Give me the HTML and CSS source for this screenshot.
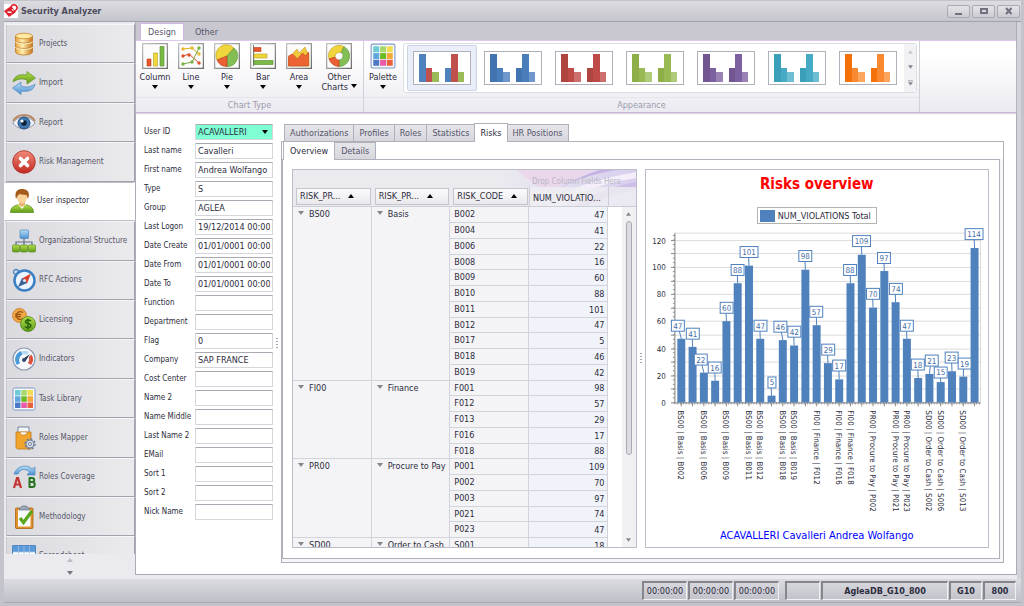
FILE: index.html
```html
<!DOCTYPE html>
<html lang="en">

<head>
    <meta charset="UTF-8">
    <meta name="viewport" content="width=device-width, initial-scale=1.0">
    <title>Security Analyzer</title>
    <link rel="stylesheet" href="styles.css">
</head>

<body>
    <!-- shared shapes -->
    <svg class="defs" width="0" height="0" aria-hidden="true">
        <defs>
            <linearGradient id="gold" x1="0" x2="1"><stop offset="0" stop-color="#e9a13b"/><stop offset=".4" stop-color="#fff0b0"/><stop offset="1" stop-color="#c9741a"/></linearGradient>
            <linearGradient id="green" x1="0" x2="0" y1="0" y2="1"><stop offset="0" stop-color="#b6e04c"/><stop offset="1" stop-color="#5f9a18"/></linearGradient>
            <linearGradient id="blue" x1="0" x2="0" y1="0" y2="1"><stop offset="0" stop-color="#b9def8"/><stop offset="1" stop-color="#4b8fd0"/></linearGradient>
            <linearGradient id="red" x1="0" x2="0" y1="0" y2="1"><stop offset="0" stop-color="#f08a7a"/><stop offset="1" stop-color="#c22a20"/></linearGradient>
            <linearGradient id="frame" x1="0" x2="1" y1="0" y2="1"><stop offset="0" stop-color="#c4c4c4"/><stop offset="1" stop-color="#6c6c6c"/></linearGradient>
            <symbol id="palette" viewBox="0 0 24 24">
                <rect x="1" y="1" width="22" height="22" rx="1.5" fill="#f5f8fd" stroke="#8299c4"/>
                <path d="M3 3h5.500v5.500H3z" fill="#6dcbd6"/><path d="M9.300 3h5.500v5.500H9.300z" fill="#a8d86c"/><path d="M15.500 3H21v5.500h-5.500z" fill="#f2dc50"/>
                <path d="M3 9.300h5.500v5.500H3z" fill="#5fa6dc"/><path d="M9.300 9.300h5.500v5.500H9.300z" fill="#6cba22"/><path d="M15.500 9.300H21v5.500h-5.500z" fill="#f5a838"/>
                <path d="M3 15.500h5.500V21H3z" fill="#4c78c4"/><path d="M9.300 15.500h5.500V21H9.300z" fill="#e85aa8"/><path d="M15.500 15.500H21V21h-5.500z" fill="#e8603c"/>
            </symbol>
            <symbol id="thumb" viewBox="0 0 58 34">
                <rect x=".5" y=".5" width="57" height="33" fill="#fff" stroke="#b0b0ba"/>
                <path class="s1" d="M6 3h7v28H6z"/><path class="s2" d="M13 17h6v14h-6z"/><path class="s3" d="M19 21h7v10h-7z"/>
                <path class="s1" d="M32 17h6v14h-6z"/><path class="s2" d="M38 3h7v28h-7z"/><path class="s3" d="M45 21h6v10h-6z"/>
            </symbol>
            <symbol id="thumb-mixed" viewBox="0 0 58 34">
                <rect x=".5" y=".5" width="57" height="33" fill="#fff" stroke="#b0b0ba"/>
                <path class="s1" d="M6 3h7v28H6zM32 17h6v14h-6z"/><path class="s2" d="M13 17h6v14h-6zM38 3h7v28h-7z"/><path class="s3" d="M19 21h7v10h-7zM45 21h6v10h-6z"/>
            </symbol>
            <symbol id="down" viewBox="0 0 6 4"><path d="M0 0h6L3 4z"/></symbol>
            <symbol id="up" viewBox="0 0 6 4"><path d="M0 4h6L3 0z"/></symbol>
        </defs>
    </svg>

    <div class="window">
        <header class="titlebar">
            <svg class="logo" viewBox="0 0 14 14"><path fill="#fff" d="M0 0h14v14H0z"/><path fill="#e01f2c" d="M0 7l7-5 5 6-7 5z"/><path d="M7 3c1-3 5-3 6 0 .6 2-1 3-2 4" fill="none" stroke="#e01f2c" stroke-width="1.600"/><path d="M3.500 8l4 .5M8 5.500l1.500 1" stroke="#fff" stroke-width="1.300"/></svg>
            <h1>Security Analyzer</h1>
            <div class="window-buttons">
                <button aria-label="Minimize"><svg viewBox="0 0 8 8"><path d="M0 6h7v2H0z"/></svg></button>
                <button aria-label="Maximize"><svg viewBox="0 0 8 8"><path fill-rule="evenodd" d="M0 1h8v6H0zM2 3v2h4V3z"/></svg></button>
                <button aria-label="Close"><svg viewBox="0 0 8 8"><path d="M1 1l5.500 6M6.500 1L1 7" fill="none" stroke="#70707e" stroke-width="2"/></svg></button>
            </div>
        </header>

        <div class="main">
            <nav class="sidebar">
                <div class="nav-list">
                    <a href="#projects"><svg viewBox="0 0 24 24"><path d="M3.500 4v16c1 4 16 4 17 0V4z" fill="url(#gold)" stroke="#b97a28" stroke-width=".8"/><ellipse cx="12" cy="4" rx="8.500" ry="2.800" fill="#ffe9a0" stroke="#c98a30" stroke-width=".8"/><path d="M3.500 9.500c2 3 15 3 17 0M3.500 15c2 3 15 3 17 0" fill="none" stroke="#fff3c4" stroke-width="1.200"/><path d="M3.500 8.700c2 3 15 3 17 0M3.500 14.200c2 3 15 3 17 0" fill="none" stroke="#b97424" stroke-width=".6"/></svg>Projects</a>
                    <a href="#import"><svg viewBox="0 0 24 24"><path d="M1 11C2 4 9 3 15 4V.500L23.500 7 15 13V9C10 7 5 8 1 11z" fill="url(#green)" stroke="#5d9022" stroke-width=".7"/><path d="M23 13c-1 7-8 8-14 7v3.500L.500 17 9 11v4c5 2 10 1 14-2z" fill="url(#blue)" stroke="#4a84bb" stroke-width=".7"/></svg>Import</a>
                    <a href="#report"><svg viewBox="0 0 24 24"><path d="M1 12C6 4 18 4 23 12c-5 7-17 8-22 0z" fill="#eef2f8" stroke="#8792a8"/><circle cx="12" cy="12" r="6" fill="#3f78ae" stroke="#264e7c"/><circle cx="12" cy="12" r="2.800" fill="#10213a"/><circle cx="10" cy="10" r="1.600" fill="#fff"/><path d="M1 10C6 2 18 2 23 10" fill="none" stroke="#b98a60" stroke-width="1.800"/></svg>Report</a>
                    <a href="#risk"><svg viewBox="0 0 24 24"><circle cx="12" cy="12" r="11.300" fill="url(#red)" stroke="#a82c24" stroke-width=".8"/><path d="M8.500 8.500l7 7M15.500 8.500l-7 7" stroke="#fff" stroke-width="3.600" stroke-linecap="round"/></svg>Risk Management</a>
                    <a href="#user" class="active"><svg viewBox="0 0 24 24"><path d="M.500 23.500c0-6 5-7 8-8h7c3 1 8 2 8 8z" fill="url(#green)" stroke="#4f8a1c" stroke-width=".7"/><path d="M8 15l4 5 4-5z" fill="#fff"/><path d="M9 11h6v5l-3 2-3-2z" fill="#e8b070"/><ellipse cx="12" cy="8" rx="5" ry="6.500" fill="#f9d29a"/><path d="M6 10C4 2 8 0 12 0s9 2 6 10l-1.500-4c-4 0-6-1-7-1L7.500 7z" fill="#a45c1c"/></svg>User inspector</a>
                    <a href="#org"><svg viewBox="0 0 24 24"><path d="M12 9v5M4 16v-3h16v3M12 13v3" fill="none" stroke="#5c7089" stroke-width="1.200"/><rect x="8" y="1" width="8.500" height="8.500" rx="1" fill="url(#blue)" stroke="#4b86bc" stroke-width=".7"/><g fill="url(#green)" stroke="#5a9020" stroke-width=".7"><rect x=".5" y="16" width="7" height="7" rx="1"/><rect x="8.500" y="16" width="7" height="7" rx="1"/><rect x="16.500" y="16" width="7" height="7" rx="1"/></g></svg>Organizational Structure</a>
                    <a href="#rfc"><svg viewBox="0 0 24 24"><circle cx="4" cy="4" r="2.500" fill="none" stroke="#4b8ac9" stroke-width="1.300"/><circle cx="12.500" cy="12.500" r="10" fill="#eaf5ff" stroke="#3c7fc3" stroke-width="2.500"/><path d="M19 5.500l-4 10-5-5z" fill="#d8402c"/><path d="M6 19l4-9 5 5z" fill="#3a5f98"/><circle cx="12.500" cy="12.500" r="1.600" fill="#dbe8f6"/></svg>RFC Actions</a>
                    <a href="#licensing"><svg viewBox="0 0 24 24"><circle cx="7.500" cy="7.500" r="7" fill="#f0a848" stroke="#c67a20" stroke-width=".8"/><path d="M11 4.500C7 2 4.500 5 4.500 7.500S7 13 11 10.500M3 6.500h6M3 8.700h6" fill="none" stroke="#9a5510" stroke-width="1.300"/><circle cx="16" cy="16" r="7.500" fill="url(#green)" stroke="#4c8618" stroke-width=".8"/><path d="M19 13c-2-2-6-1-5.500 1s5.500 1.500 5.500 3.500-4 3-6 1M16 10.500v11" fill="none" stroke="#28640c" stroke-width="1.500"/></svg>Licensing</a>
                    <a href="#indicators"><svg viewBox="0 0 24 24"><circle cx="12" cy="12" r="11" fill="#f6f8fb" stroke="#8c9cb4" stroke-width="1.200"/><path d="M5 18A9 9 0 0 1 9 4l1.500 3.500A6 6 0 0 0 8 16z" fill="#4a9ad8"/><path d="M10 4a9 9 0 0 1 7 1l-2.500 3c-1-.7-2.500-.8-4-.5z" fill="#b5d9f0"/><path d="M19.500 7.500a9 9 0 0 1-.5 10.500l-3-2a6 6 0 0 0 .8-6z" fill="#d9503c"/><path d="M18 7l-4.500 7-2.500-2z" fill="#20304c"/><circle cx="12" cy="13" r="2" fill="#33486a"/></svg>Indicators</a>
                    <a href="#tasks"><svg viewBox="0 0 24 24"><use href="#palette"/></svg>Task Library</a>
                    <a href="#mapper"><svg viewBox="0 0 24 24"><path d="M6 1h11v7H6z" fill="#f4f6fa" stroke="#75859f"/><path d="M4 6h15v17H6c-1 0-2-1-2-2z" fill="#f2a52c" stroke="#c07a16" stroke-width=".8"/><path d="M8 6h7c0 4-7 4-7 0z" fill="#fff" stroke="#b97a20" stroke-width=".6"/><circle cx="18" cy="18" r="4" fill="#d6dde8" stroke="#71809a" stroke-width="1"/><circle cx="18" cy="18" r="5" fill="none" stroke="#71809a" stroke-width="1.500" stroke-dasharray="2 1.900"/><circle cx="18" cy="18" r="1.500" fill="#fff" stroke="#71809a"/></svg>Roles Mapper</a>
                    <a href="#coverage"><svg viewBox="0 0 24 24"><path d="M2 9C5 0 16-1 20 4l3-2v8h-8l2.500-3C13 3 8 4 6 9z" fill="url(#blue)" stroke="#4a88bd" stroke-width=".7"/><path d="M2 23l3-10h1l3 10M3 19.500h5" fill="none" stroke="#c43430" stroke-width="2.200"/><path d="M17.500 12.500v10M17 13h3c3 0 3 4 0 4h-2 2.500c3 0 3 5 0 5H17" fill="none" stroke="#27761f" stroke-width="2"/></svg>Roles Coverage</a>
                    <a href="#methodology"><svg viewBox="0 0 24 24"><rect x="3.500" y="3" width="17.500" height="20.500" rx="1" fill="#e0912c" stroke="#a96514" stroke-width=".8"/><path d="M6 5h12.500v16.500H6z" fill="#f8fafc"/><path d="M7 5c0-3 3-2 3-4h4.500c0 2 3 1 3 4z" fill="#9aa7b8" stroke="#65748b" stroke-width=".7"/><path d="M8 13l3.500 4.500L20 6" fill="none" stroke="#5aa61c" stroke-width="3.200"/></svg>Methodology</a>
                    <a href="#spreadsheet"><svg viewBox="0 0 24 24"><path d="M.500 1.500h23v21H.500z" fill="#fff" stroke="#5588c0"/><path d="M1 2h22v6H1z" fill="#5a9ada"/><path d="M6.500 2v20M12 2v20M17.500 2v20M1 8h22M1 13h22" stroke="#9dc2e6" stroke-width=".8"/></svg>Spreadsheet</a>
                </div>
                <div class="nav-scroll">
                    <button aria-label="Scroll up" disabled><svg><use href="#up"/></svg></button>
                    <button aria-label="Scroll down"><svg><use href="#down"/></svg></button>
                </div>
            </nav>

            <div class="content">
                <div class="ribbon-tabs">
                    <button class="active">Design</button>
                    <button>Other</button>
                </div>
                <div class="ribbon">
                    <section class="group">
                        <div class="group-body">
                            <button><svg class="icon" viewBox="0 0 26 26"><path d="M.500.500h25v25H.500z" fill="#fcfcfc" stroke="url(#frame)" stroke-width="1.500"/><path d="M5 16h4v7H5z" fill="#e8562c" stroke="#b93c18" stroke-width=".6"/><path d="M11.500 10h4v13h-4z" fill="#f0d83c" stroke="#b39c18" stroke-width=".6"/><path d="M18 3.500h4V23h-4z" fill="#7cba48" stroke="#4f8c28" stroke-width=".6"/></svg>Column<svg class="arrow"><use href="#down"/></svg></button>
                            <button><svg class="icon" viewBox="0 0 26 26"><path d="M.500.500h25v25H.500z" fill="#fcfcfc" stroke="url(#frame)" stroke-width="1.500"/><path d="M5 6l9-1 7 6" fill="none" stroke="#d8b020"/><path d="M5 13l6-2 10 9" fill="none" stroke="#d84c28"/><path d="M5 21l9-2 7-14" fill="none" stroke="#70aa40"/><g fill="#e8b92c"><circle cx="5" cy="6" r="1.700"/><circle cx="14" cy="5" r="1.700"/><circle cx="21" cy="11" r="1.700"/></g><g fill="#e0502c"><circle cx="5" cy="13" r="1.700"/><circle cx="11" cy="12" r="1.700"/><circle cx="21" cy="20" r="1.700"/></g><g fill="#78b444"><circle cx="5" cy="21" r="1.700"/><circle cx="14" cy="19" r="1.700"/><circle cx="21" cy="5" r="1.700"/></g></svg>Line<svg class="arrow"><use href="#down"/></svg></button>
                            <button><svg class="icon" viewBox="0 0 26 26"><path d="M.500.500h25v25H.500z" fill="#fcfcfc" stroke="url(#frame)" stroke-width="1.500"/><path d="M13 13L3 17A10.500 10.500 0 0 1 20 5z" fill="#f0d63c" stroke="#b79a1c" stroke-width=".6"/><path d="M13 13l7-8a10.500 10.500 0 0 1-7 18.500z" fill="#84be54" stroke="#55902c" stroke-width=".6"/><path d="M13 13v10.500A10.500 10.500 0 0 1 3 17z" fill="#ea6034" stroke="#b9401c" stroke-width=".6"/></svg>Pie<svg class="arrow"><use href="#down"/></svg></button>
                            <button><svg class="icon" viewBox="0 0 26 26"><path d="M.500.500h25v25H.500z" fill="#fcfcfc" stroke="url(#frame)" stroke-width="1.500"/><path d="M3.500 2v21" stroke="#777"/><path d="M4 4.500h7v4H4z" fill="#e8562c" stroke="#b93c18" stroke-width=".6"/><path d="M4 11h13v4H4z" fill="#f0d83c" stroke="#b39c18" stroke-width=".6"/><path d="M4 17.500h19v4H4z" fill="#7cba48" stroke="#4f8c28" stroke-width=".6"/></svg>Bar<svg class="arrow"><use href="#down"/></svg></button>
                            <button><svg class="icon" viewBox="0 0 26 26"><path d="M.500.500h25v25H.500z" fill="#fcfcfc" stroke="url(#frame)" stroke-width="1.500"/><path d="M2.500 15l8.500-9 2 4 6-6 2 5 2 2v12h-20.500z" fill="#f0c83c" stroke="#c49a1c" stroke-width=".6"/><path d="M2.500 13l4-2 5 5 5-6 3 3 3-4v14h-20z" fill="#ec6434" stroke="#c3441c" stroke-width=".6"/></svg>Area<svg class="arrow"><use href="#down"/></svg></button>
                            <button class="wide"><svg class="icon" viewBox="0 0 26 26"><path d="M.500.500h25v25H.500z" fill="#fcfcfc" stroke="url(#frame)" stroke-width="1.500"/><path d="M3 16A10.500 10.500 0 0 1 18 3.700L15 9.500A4.500 4.500 0 0 0 9 14z" fill="#f0d63c" stroke="#b79a1c" stroke-width=".6"/><path d="M18 3.700A10.500 10.500 0 0 1 13 23.500V17a4 4 0 0 0 2-7.500z" fill="#84be54" stroke="#55902c" stroke-width=".6"/><path d="M13 23.500A10.500 10.500 0 0 1 3 16l6-2c1 2 2 3 4 3z" fill="#ea6034" stroke="#b9401c" stroke-width=".6"/></svg>Other<span>Charts <svg class="arrow"><use href="#down"/></svg></span></button>
                        </div>
                        <h2>Chart Type</h2>
                    </section>
                    <section class="group appearance">
                        <div class="group-body">
                            <button><svg class="icon" viewBox="0 0 24 24"><use href="#palette"/></svg>Palette<svg class="arrow"><use href="#down"/></svg></button>
                            <div class="gallery">
                                <button class="mixed selected" aria-label="Office"><svg><use href="#thumb-mixed"/></svg></button>
                                <button class="blue" aria-label="Blue"><svg><use href="#thumb"/></svg></button>
                                <button class="red" aria-label="Red"><svg><use href="#thumb"/></svg></button>
                                <button class="green" aria-label="Green"><svg><use href="#thumb"/></svg></button>
                                <button class="purple" aria-label="Purple"><svg><use href="#thumb"/></svg></button>
                                <button class="teal" aria-label="Teal"><svg><use href="#thumb"/></svg></button>
                                <button class="orange" aria-label="Orange"><svg><use href="#thumb"/></svg></button>
                                <div class="gallery-scroll">
                                    <svg class="off"><use href="#up"/></svg>
                                    <svg><use href="#down"/></svg>
                                    <svg class="more" viewBox="0 0 6 6"><path d="M0 0h6v1H0zM0 2h6L3 6z"/></svg>
                                </div>
                            </div>
                        </div>
                        <h2>Appearance</h2>
                    </section>
                </div>

                <div class="workspace">
                    <form class="user-form">
                        <label for="userid">User ID</label><select id="userid"><option>ACAVALLERI</option></select>
                        <label for="lastname">Last name</label><input id="lastname" value="Cavalleri">
                        <label for="firstname">First name</label><input id="firstname" value="Andrea Wolfango">
                        <label for="type">Type</label><input id="type" value="S">
                        <label for="group">Group</label><input id="group" value="AGLEA">
                        <label for="logon">Last Logon</label><input id="logon" value="19/12/2014 00:00:00">
                        <label for="created">Date Create</label><input id="created" value="01/01/0001 00:00:00">
                        <label for="from">Date From</label><input id="from" value="01/01/0001 00:00:00">
                        <label for="to">Date To</label><input id="to" value="01/01/0001 00:00:00">
                        <label for="function">Function</label><input id="function">
                        <label for="department">Department</label><input id="department">
                        <label for="flag">Flag</label><input id="flag" value="0">
                        <label for="company">Company</label><input id="company" value="SAP FRANCE">
                        <label for="cost">Cost Center</label><input id="cost">
                        <label for="name2">Name 2</label><input id="name2">
                        <label for="middle">Name Middle</label><input id="middle">
                        <label for="last2">Last Name 2</label><input id="last2">
                        <label for="email">EMail</label><input id="email">
                        <label for="sort1">Sort 1</label><input id="sort1">
                        <label for="sort2">Sort 2</label><input id="sort2">
                        <label for="nick">Nick Name</label><input id="nick">
                    </form>
                    <div class="splitter"></div>

                    <div class="details">
                        <div class="tabs">
                            <button>Authorizations</button>
                            <button>Profiles</button>
                            <button>Roles</button>
                            <button>Statistics</button>
                            <button class="active">Risks</button>
                            <button>HR Positions</button>
                        </div>
                        <div class="outer-pane">
                            <div class="tabs inner-tabs">
                                <button class="active">Overview</button>
                                <button>Details</button>
                            </div>
                            <div class="inner-pane">
                                <div class="pivot">
                                    <svg class="splash" viewBox="0 0 140 36" preserveAspectRatio="none">
                                        <defs><linearGradient id="veil"><stop offset="0" stop-color="#ebebef"/><stop offset="1" stop-color="#d9cfee"/></linearGradient></defs>
                                        <path d="M0 0h140v36H0z" fill="url(#veil)"/>
                                        <path d="M20 0h80L50 22z" fill="#ead7ec"/>
                                        <path d="M40 36C70 10 90 6 120 0h-16C80 8 60 18 40 36z" fill="#c4b2e4"/>
                                        <path d="M52 36C80 14 100 10 140 2v6C104 14 84 22 66 36z" fill="#f4effa"/>
                                        <path d="M80 36c16-14 40-20 60-24v8c-20 4-36 8-48 16z" fill="#cdbfe8"/>
                                    </svg>
                                    <table>
                                        <colgroup><col><col><col><col><col class="rest"></colgroup>
                                        <thead>
                                            <tr class="drop-row"><td colspan="3"></td><td colspan="2">Drop Column Fields Here</td></tr>
                                            <tr class="field-row">
                                                <th><span class="field">RISK_PR...<svg><use href="#up"/></svg></span></th>
                                                <th><span class="field">RISK_PR...<svg><use href="#up"/></svg></span></th>
                                                <th><span class="field">RISK_CODE<svg><use href="#up"/></svg></span></th>
                                                <th class="measure">NUM_VIOLATIO...</th>
                                                <th class="filler"></th>
                                            </tr>
                                        </thead>
                                        <tbody>
                                            <tr><th rowspan="11"><svg><use href="#down"/></svg>BS00</th><th rowspan="11"><svg><use href="#down"/></svg>Basis</th><th>B002</th><td>47</td></tr>
                                            <tr><th>B004</th><td>41</td></tr>
                                            <tr><th>B006</th><td>22</td></tr>
                                            <tr><th>B008</th><td>16</td></tr>
                                            <tr><th>B009</th><td>60</td></tr>
                                            <tr><th>B010</th><td>88</td></tr>
                                            <tr><th>B011</th><td>101</td></tr>
                                            <tr><th>B012</th><td>47</td></tr>
                                            <tr><th>B017</th><td>5</td></tr>
                                            <tr><th>B018</th><td>46</td></tr>
                                            <tr><th>B019</th><td>42</td></tr>
                                            <tr><th rowspan="5"><svg><use href="#down"/></svg>FI00</th><th rowspan="5"><svg><use href="#down"/></svg>Finance</th><th>F001</th><td>98</td></tr>
                                            <tr><th>F012</th><td>57</td></tr>
                                            <tr><th>F013</th><td>29</td></tr>
                                            <tr><th>F016</th><td>17</td></tr>
                                            <tr><th>F018</th><td>88</td></tr>
                                            <tr><th rowspan="5"><svg><use href="#down"/></svg>PR00</th><th rowspan="5"><svg><use href="#down"/></svg>Procure to Pay</th><th>P001</th><td>109</td></tr>
                                            <tr><th>P002</th><td>70</td></tr>
                                            <tr><th>P003</th><td>97</td></tr>
                                            <tr><th>P021</th><td>74</td></tr>
                                            <tr><th>P023</th><td>47</td></tr>
                                            <tr><th><svg><use href="#down"/></svg>SD00</th><th><svg><use href="#down"/></svg>Order to Cash</th><th>S001</th><td>18</td></tr>
                                        </tbody>
                                    </table>
                                    <div class="scrollbar">
                                        <svg><use href="#up"/></svg>
                                        <div class="track"><div class="thumb"></div></div>
                                        <svg><use href="#down"/></svg>
                                    </div>
                                </div>
                                <div class="splitter"></div>
                                <figure class="chart">
                                    <h2>Risks overview</h2>
                                    <div class="legend"><span class="swatch"></span>NUM_VIOLATIONS Total</div>
                                    <svg id="plot" viewBox="0 0 344 300" role="img" aria-label="Violations per risk"></svg>
                                    <figcaption>ACAVALLERI Cavalleri Andrea Wolfango</figcaption>
                                </figure>
                            </div>
                        </div>
                    </div>
                </div>
            </div>
        </div>

        <footer class="statusbar">
            <span class="cell">00:00:00</span>
            <span class="cell">00:00:00</span>
            <span class="cell">00:00:00</span>
            <span class="cell blank"></span>
            <span class="cell database">AgleaDB_G10_800</span>
            <span class="cell short">G10</span>
            <span class="cell short">800</span>
        </footer>
    </div>
    <script src="chart.js"></script>
</body>

</html>
```
FILE: styles.css
```css
* {
    box-sizing: border-box;
}

body {
    margin: 0;
    font-family: "DejaVu Sans Condensed", "DejaVu Sans", Tahoma, sans-serif;
    font-size: 9px;
    line-height: 12px;
    color: #2c2c3c;
    background: #c6c6ce;
}

button,
input,
select {
    font: inherit;
    color: inherit;
    margin: 0;
}

button {
    border: 0;
    padding: 0;
    background: none;
}

h1,
h2 {
    margin: 0;
    font-size: 9px;
}

.defs {
    position: absolute;
}

.window {
    display: flex;
    flex-direction: column;
    height: 100vh;
    border: solid #c3c3cc;
    border-width: 1px 3px 3px 4px;
    border-radius: 4px 4px 2px 2px;
}

/* title bar */
.titlebar {
    display: flex;
    align-items: center;
    gap: 3px;
    height: 21px;
    background: linear-gradient(#dcdce1, #c5c5cd);
    border-bottom: 1px solid #a2a2ae;
    color: #4b4b5a;
}

.logo {
    width: 14px;
    height: 14px;
}

.window-buttons {
    display: flex;
    gap: 2px;
    margin-left: auto;
    padding-right: 1px;
}

.window-buttons button {
    display: flex;
    align-items: center;
    justify-content: center;
    width: 23px;
    height: 13px;
    border: 1px solid #aaaab5;
    border-radius: 2px;
    background: linear-gradient(#e4e4e8, #cbcbd2);
}

.window-buttons svg {
    width: 8px;
    height: 8px;
    fill: #70707e;
}

.main {
    display: flex;
    flex: 1;
    min-height: 0;
    background: #ebebef;
    border-right: 4px solid #d3d3da;
}

/* sidebar */
.sidebar {
    display: flex;
    flex-direction: column;
    flex: 0 0 131px;
}

.nav-list {
    flex: 1;
    min-height: 0;
    display: grid;
    grid-auto-rows: 7.44%;
    overflow: hidden;
    padding-top: 2px;
    font-size: 8px;
}

.nav-list a {
    display: flex;
    align-items: center;
    gap: 3px;
    padding-left: 5px;
    margin-left: 2px;
    border: 1px solid #a3a3af;
    border-top-color: #f6f6f8;
    border-left-color: #c9c9d1;
    background: linear-gradient(90deg, #dadadf, #ebebee);
    color: #565666;
    text-decoration: none;
    white-space: nowrap;
}

.nav-list a.active {
    margin-left: 0;
    background: #fff;
    border-color: #bdbdc6 #fff;
    color: #2c2c3c;
}

.nav-list svg {
    flex: none;
    width: 24px;
    height: 24px;
}

.nav-scroll {
    display: flex;
    flex-direction: column;
    align-items: center;
    justify-content: space-around;
    height: 25px;
}

.nav-scroll button {
    display: flex;
}

.nav-scroll svg {
    width: 6px;
    height: 4px;
    fill: #74747f;
}

.nav-scroll button:disabled svg {
    fill: #bcbcc4;
}

.content {
    display: flex;
    flex-direction: column;
    flex: 1;
    min-width: 0;
    margin-bottom: 4px;
    border: solid #acacb7;
    border-width: 0 1px 1px 1px;
    background: #fff;
}

/* ribbon */
.ribbon-tabs {
    display: flex;
    padding: 1px 4px 0;
    background: #c9c8d1;
    border-bottom: 1px solid #dcc8ea;
}

.ribbon-tabs button {
    height: 17px;
    padding: 0 8px;
    color: #55556a;
}

.ribbon-tabs button.active {
    margin: 0 3px -1px 0;
    background: #fff;
    border: 1px solid #d3b6e6;
    border-bottom: 0;
    padding: 0 7px;
}

.ribbon {
    display: flex;
    height: 72px;
    background: linear-gradient(#fff 20%, #ebeaf1);
    border-bottom: 1px solid #c8b4d8;
    box-shadow: 0 1px 1px #d8d8de;
}

.group {
    display: flex;
    flex-direction: column;
    border-right: 1px solid #d0d0d9;
}

.group h2 {
    border-top: 1px solid #e6e5ec;
    height: 15px;
    font-weight: normal;
    line-height: 14px;
    text-align: center;
    color: #9c9cab;
}

.group-body {
    display: flex;
    flex: 1;
    padding: 2px 2px 0 1px;
}

.group-body > button {
    display: flex;
    flex-direction: column;
    align-items: center;
    width: 36px;
    line-height: 10px;
}

.group-body > .wide {
    width: 44px;
}

.icon {
    width: 26px;
    height: 26px;
    margin-bottom: 3px;
}

.arrow {
    width: 6px;
    height: 4px;
    margin-top: 3px;
}

span .arrow {
    margin: 0 0 2px;
}

.gallery {
    display: flex;
    align-items: center;
    gap: 1px;
    height: 50px;
    margin-left: 2px;
    padding: 0 0 0 3px;
    border: 1px solid #dcdce4;
    border-radius: 3px;
    background: #fff;
}

.gallery button {
    display: flex;
    align-items: center;
    justify-content: center;
    width: 70px;
    height: 46px;
    border: 1px solid transparent;
    border-radius: 2px;
}

.gallery .selected {
    background: #e9eef8;
    border-color: #ccd3e2;
}

.gallery button svg {
    width: 58px;
    height: 34px;
}

.s1 {
    fill: var(--a);
}

.s2 {
    fill: var(--b);
}

.s3 {
    fill: var(--c);
}

.mixed {
    --a: #4f81bd;
    --b: #c0504d;
    --c: #9bbb59;
}

.blue {
    --a: #4474b0;
    --b: #4a7ebb;
    --c: #6f97cb;
}

.red {
    --a: #b04441;
    --b: #be4b48;
    --c: #cd6f6d;
}

.green {
    --a: #8eae48;
    --b: #98b954;
    --c: #afca78;
}

.purple {
    --a: #735690;
    --b: #7d60a0;
    --c: #9a82b5;
}

.teal {
    --a: #3aa0ba;
    --b: #46aac5;
    --c: #6dbdd3;
}

.orange {
    --a: #f5720a;
    --b: #fa8a32;
    --c: #fba55e;
}

.gallery-scroll {
    display: flex;
    flex-direction: column;
    align-items: center;
    justify-content: space-around;
    width: 12px;
    height: 48px;
    background: #f2f2f5;
}

.gallery-scroll svg {
    width: 5px;
    height: 4px;
    fill: #858592;
}

.gallery-scroll .more {
    height: 6px;
}

.gallery-scroll .off {
    fill: #c8c8d0;
}

/* user data */
.workspace {
    display: flex;
    flex: 1;
    min-height: 0;
    padding: 11px 12px 11px 8px;
}

.user-form {
    display: grid;
    grid-template-columns: 51px 78px;
    grid-auto-rows: 16px;
    row-gap: 3px;
    align-content: start;
    align-items: center;
}

.user-form label {
    font-size: 8px;
    white-space: nowrap;
}

.user-form input,
.user-form select {
    width: 100%;
    height: 16px;
    padding: 0 2px;
    border: 1px solid #d5d5dc;
    border-top-color: #a9a9b4;
    border-radius: 0;
    background: #fff;
}

.user-form select {
    appearance: none;
    background: #7fffd4 url('data:image/svg+xml,<svg xmlns="http://www.w3.org/2000/svg" viewBox="0 0 6 4"><path d="M0 0h6L3 4z"/></svg>') no-repeat right 4px center / 6px 4px;
}

.splitter {
    flex: 0 0 8px;
    align-self: center;
    height: 12px;
    background: repeating-linear-gradient(#a4a4b0 0 1px, #fff 1px 3px) center / 2px 100% no-repeat;
}

/* tab panes */
.details {
    display: flex;
    flex-direction: column;
    flex: 1;
    min-width: 0;
}

.tabs {
    display: flex;
    align-items: flex-end;
    padding-left: 3px;
}

.tabs button {
    height: 17px;
    padding: 0 5px;
    border: 1px solid #b0b0bb;
    border-bottom: 0;
    margin-right: -1px;
    background: linear-gradient(#e6e6ea, #d6d6dd);
    color: #55556a;
}

.tabs button.active {
    position: relative;
    height: 19px;
    margin-bottom: -1px;
    margin-top: -1px;
    background: #fff;
    color: #2c2c3c;
}

.outer-pane {
    display: flex;
    flex-direction: column;
    flex: 1;
    min-height: 0;
    padding: 0 3px 3px 0;
    border: 1px solid #b0b0bb;
    background: #f6f6f8;
}

.inner-tabs {
    padding-left: 1px;
    background: #fff;
    margin-right: -3px;
}

.inner-tabs button {
    padding: 0 6px;
}

.inner-pane {
    display: flex;
    flex: 1;
    min-height: 0;
    padding: 9px 10px 10px 9px;
    border: 1px solid #b0b0bb;
    background: #fff;
}

/* pivot grid */
.pivot {
    position: relative;
    flex: 1 1 0;
    min-width: 0;
    overflow: hidden;
    border: 1px solid #bcbcc8;
    background: #ebebef;
}

.pivot table {
    position: relative;
    width: 100%;
    table-layout: fixed;
    border-collapse: separate;
    border-spacing: 0;
}

.rest {
    width: 28px;
}

.pivot th,
.pivot td {
    padding: 0;
    font-weight: normal;
    text-align: left;
    white-space: nowrap;
    overflow: hidden;
}

.splash {
    position: absolute;
    top: 0;
    right: 0;
    width: 140px;
    height: 36px;
}

.drop-row td {
    height: 17px;
    padding: 6px 0 0 3px;
    line-height: 11px;
    color: #b9b5c4;
    font-size: 8px;
}

.field-row th {
    height: 20px;
    border-bottom: 1px solid #cdcdd6;
}

.field {
    display: flex;
    align-items: center;
    height: 17px;
    margin: 0 1px 1px 3px;
    padding: 0 3px;
    border: 1px solid #c5c5ce;
    background: linear-gradient(#fbfbfc, #e9e9ed);
}

.field svg {
    width: 6px;
    height: 4px;
    margin-left: 8px;
}

.field-row .measure,
.field-row .filler {
    border-left: 1px solid #cdcdd6;
    background: #efeff3cc;
}

.field-row .measure {
    padding: 2px 0 0 3px;
}

.pivot tbody tr {
    height: 16px;
}

.pivot tbody tr:nth-child(4n) {
    height: 15px;
}

.pivot tbody th,
.pivot tbody td {
    border: solid #d3d3da;
    border-width: 0 1px 1px 0;
    line-height: 14px;
}

.pivot tbody th {
    padding-left: 4px;
    vertical-align: top;
    background: #f4f4f6;
}

.pivot tbody td {
    padding-right: 2px;
    text-align: right;
    background: #f0f4fa;
}

.pivot tbody svg {
    width: 6px;
    height: 4px;
    margin: 0 5px 2px 1px;
    fill: #85858f;
}

.scrollbar {
    position: absolute;
    top: 37px;
    right: 0;
    bottom: 0;
    display: flex;
    flex-direction: column;
    align-items: center;
    width: 28px;
    padding: 5px 0 5px 14px;
    background: linear-gradient(90deg, #fff 14px, #f1f1f4 14px);
}

.scrollbar svg {
    width: 5px;
    height: 4px;
    fill: #85858f;
}

.track {
    flex: 1;
    padding: 5px 0;
}

.thumb {
    width: 6px;
    height: 75%;
    border: 1px solid #aaaab4;
    border-radius: 3px;
    background: #dcdce2;
}

/* chart */
.chart {
    display: flex;
    flex-direction: column;
    align-items: center;
    flex: 1 1 0;
    min-width: 0;
    margin: 0;
    border: 1px solid #bcbcc8;
    background: #fff;
}

.chart h2 {
    margin-top: 5px;
    font-size: 15px;
    line-height: 18px;
    color: #f00;
}

.legend {
    display: flex;
    align-items: center;
    gap: 3px;
    height: 17px;
    margin-top: 14px;
    padding: 0 5px 0 2px;
    border: 1px solid #b4b4b4;
}

.swatch {
    width: 15px;
    height: 12px;
    background: #4f81bd;
}

#plot {
    flex: 1;
    min-height: 0;
    width: 100%;
    font-size: 8px;
    fill: #2c2c3c;
}

.chart figcaption {
    padding-bottom: 5px;
    font-size: 11px;
    line-height: 13px;
    color: #00f;
}

.grid-line {
    stroke: #dcdcdc;
}

.axis {
    stroke: #8c8c8c;
}

.bar {
    fill: #4f81bd;
}

.leader {
    stroke: #4f81bd;
}

.tag {
    fill: #fff;
    stroke: #4f81bd;
}

.tag-text {
    fill: #3f6ca6;
    text-anchor: middle;
}

.tick-text {
    text-anchor: end;
}

/* status bar */
.statusbar {
    display: flex;
    justify-content: flex-end;
    align-items: center;
    gap: 1px;
    height: 24px;
    padding-right: 5px;
    background: linear-gradient(#dbdbe1, #bfbfc8);
    border-bottom: 1px solid #a9a9b4;
}

.cell {
    width: 45px;
    height: 19px;
    border: 1px solid #f0f0f3;
    border-top: 2px solid #85858c;
    border-left: 2px solid #85858c;
    line-height: 16px;
    text-align: center;
}

.cell.blank {
    width: 35px;
    margin-left: 5px;
}

.cell.database {
    width: 127px;
}

.cell.short {
    width: 33px;
}

.cell.database,
.cell.short {
    font-weight: bold;
}
```
FILE: chart.js
```javascript
// value, label shift x, label shift y, category text (empty when the axis skips it)
const rows = [
    [47, -3, 0, "BS00 | Basis | B002"],
    [41, 0, 0, ""],
    [22, -3, 0, "BS00 | Basis | B006"],
    [16, 0, 0, ""],
    [60, 0, 0, "BS00 | Basis | B009"],
    [88, 0, 0, ""],
    [101, 0, 0, "BS00 | Basis | B011"],
    [47, 0, 0, "BS00 | Basis | B012"],
    [5, 0, 0, ""],
    [46, -2, 0, "BS00 | Basis | B018"],
    [42, 0, 0, "BS00 | Basis | B019"],
    [98, 0, 0, ""],
    [57, 0, 0, "FI00 | Finance | F012"],
    [29, 0, 0, ""],
    [17, 0, 0, "FI00 | Finance | F016"],
    [88, 0, 0, "FI00 | Finance | F018"],
    [109, 0, 0, ""],
    [70, 0, 0, "PR00 | Procure to Pay | P002"],
    [97, 0, 0, ""],
    [74, 0, 0, "PR00 | Procure to Pay | P021"],
    [47, 0, 0, "PR00 | Procure to Pay | P023"],
    [18, 0, 0, ""],
    [21, 2, 0, "SD00 | Order to Cash | S002"],
    [15, 0, 4, "SD00 | Order to Cash | S006"],
    [23, 0, 0, ""],
    [19, 1, 0, "SD00 | Order to Cash | S013"],
    [114, 0, 0, ""]
];

const plot = document.getElementById("plot");
const left = 29, right = 336, top0 = 6, base = 176;
const step = (right - left) / 27.1;
const yOf = v => base - v * (base - top0) / 125;

function add(name, attrs, text) {
    const el = document.createElementNS("http://www.w3.org/2000/svg", name);
    for (const key in attrs) el.setAttribute(key, attrs[key]);
    if (text !== undefined) el.textContent = text;
    plot.appendChild(el);
}

function line(cls, x1, y1, x2, y2) {
    add("line", { class: cls, x1, y1, x2, y2 });
}

// grid and axes
add("rect", { class: "grid-line", x: left, y: top0, width: right - left, height: base - top0, fill: "none" });
for (let v = 0; v <= 120; v += 10) {
    const y = Math.round(yOf(v)) + 0.5;
    line("grid-line", left, y, right, y);
    line("axis", left - 4, y, left, y);
    if (v % 20 === 0) add("text", { class: "tick-text", x: left - 9, y: y + 3 }, v);
}
for (let v = 0; v < 125; v += 3.33) line("axis", left - 2, yOf(v), left, yOf(v));
line("axis", left, top0, left, base);
line("axis", left, base + 0.5, right, base + 0.5);
for (let x = left; x < right; x += step / 4) line("axis", x, base, x, base + 2);

rows.forEach(([value, , , name], i) => {
    const x = left + step * (i + 0.57);
    const y = yOf(value);
    add("rect", { class: "bar", x: x - 4, y, width: 8, height: base - y });
    line("axis", x, base, x, base + 4);
    if (name) add("text", { transform: `translate(${x - 3} ${base + 8}) rotate(90)` }, name);
});

// value tags go over the bars
rows.forEach(([value, dx, dy], i) => {
    const x = left + step * (i + 0.57);
    const y = yOf(value);
    const w = value > 99 ? 18 : value > 9 ? 13 : 8;
    const cx = x + dx - 0.5, cy = y + dy - 13.5;
    line("leader", x, y, cx, cy);
    add("rect", { class: "tag", x: Math.round(cx - w / 2) + 0.5, y: Math.round(cy - 6) + 0.5, width: w, height: 11 });
    add("text", { class: "tag-text", x: Math.round(cx - w / 2) + w / 2 + 0.5, y: Math.round(cy) + 3 }, value);
});
```
